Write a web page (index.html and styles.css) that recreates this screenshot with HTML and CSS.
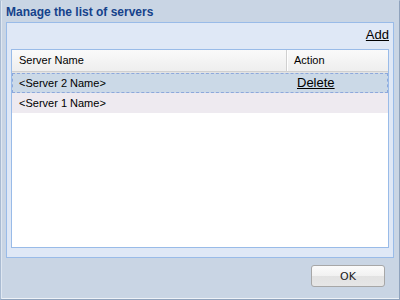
FILE: index.html
```html
<!DOCTYPE html>
<html lang="en">
<head>
  <meta charset="UTF-8">
  <title>Manage the list of servers</title>
  <link rel="stylesheet" href="styles.css">
</head>
<body>
  <div class="window">
    <div class="window-title">Manage the list of servers</div>

    <div class="window-body">
      <div class="toolbar">
        <a href="#" class="link">Add</a>
      </div>

      <div class="grid">
        <div class="grid-head">
          <div class="col-name">Server Name</div>
          <div class="col-action">Action</div>
        </div>
        <div class="grid-row selected">
          <div class="col-name">&lt;Server 2 Name&gt;</div>
          <div class="col-action"><a href="#" class="link">Delete</a></div>
        </div>
        <div class="grid-row alt">
          <div class="col-name">&lt;Server 1 Name&gt;</div>
          <div class="col-action"></div>
        </div>
      </div>
    </div>

    <div class="window-footer">
      <button class="btn">OK</button>
    </div>
  </div>
</body>
</html>
```

FILE: styles.css
```css
body {
  margin: 0;
  font-family: 'Liberation Sans', Arial, sans-serif;
  font-size: 11px;
  color: #000;
}

.window {
  width: 400px;
  height: 300px;
  box-sizing: border-box;
  background-color: #c9d5e4;
  border: 1px solid #8fa3bd;
  border-left-color: #a9bbd2;
  border-top-color: #c9d5e4;
  box-shadow: inset 1px 0 0 #dfe7f1, inset 0 -1px 0 #eef2f7;
  display: flex;
  flex-direction: column;
}

.window-title {
  height: 21px;
  line-height: 23px;
  padding-left: 5px;
  font-weight: bold;
  font-size: 12px;
  color: #15428b;
}

.window-body {
  margin: 0 5px 0 5px;
  height: 236px;
  box-sizing: border-box;
  background-color: #dfe8f6;
  border: 1px solid #99bbe8;
  padding: 0 4px 9px 4px;
  display: flex;
  flex-direction: column;
}

.toolbar {
  height: 26px;
  display: flex;
  justify-content: flex-end;
  align-items: flex-end;
}

.toolbar .link {
  font-size: 13px;
  line-height: 18px;
  margin-bottom: 5px;
}

.link {
  color: #000;
  text-decoration: underline;
}

.grid {
  flex: 1;
  background-color: #fff;
  border: 1px solid #99bbe8;
}

.grid-head {
  display: flex;
  height: 21px;
  background: linear-gradient(#fafafa, #eeeeee);
  border-bottom: 1px solid #d0d0d0;
  box-shadow: 0 1px 0 #e4e4e4;
}

.grid-head > div {
  line-height: 21px;
}

.col-name {
  flex: 1;
  padding-left: 7px;
}

.col-action {
  width: 102px;
  box-sizing: border-box;
  padding-left: 7px;
}

.grid-head .col-action {
  border-left: 1px solid #d0d0d0;
  box-shadow: inset 1px 0 0 #fff;
}

.grid-row {
  display: flex;
  height: 20px;
  line-height: 20px;
  box-sizing: border-box;
}

.grid-row .col-action {
  padding-left: 11px;
}

.grid-row.selected {
  background-color: #cbd9e7;
  border: 1px dashed #8da8dc;
  line-height: 18px;
  margin-top: 1px;
}

.grid-row.selected .col-name {
  padding-left: 6px;
}

.grid-row.selected .col-action {
  width: 101px;
}

.grid-row.selected .link {
  font-size: 13px;
}

.grid-row.alt {
  background-color: #eeeaf0;
}

.window-footer {
  flex: 1;
  display: flex;
  justify-content: flex-end;
  align-items: flex-start;
  padding: 7px 14px 0 0;
}

.btn {
  width: 74px;
  height: 22px;
  font-family: 'DejaVu Sans', Tahoma, sans-serif;
  font-size: 11px;
  color: #222;
  background: linear-gradient(#fbfbfb 0%, #f1f1f1 50%, #e2e2e2 51%, #e6e6e6 100%);
  border: 1px solid #a7a7a7;
  border-radius: 3px;
  padding: 0;
}
```
